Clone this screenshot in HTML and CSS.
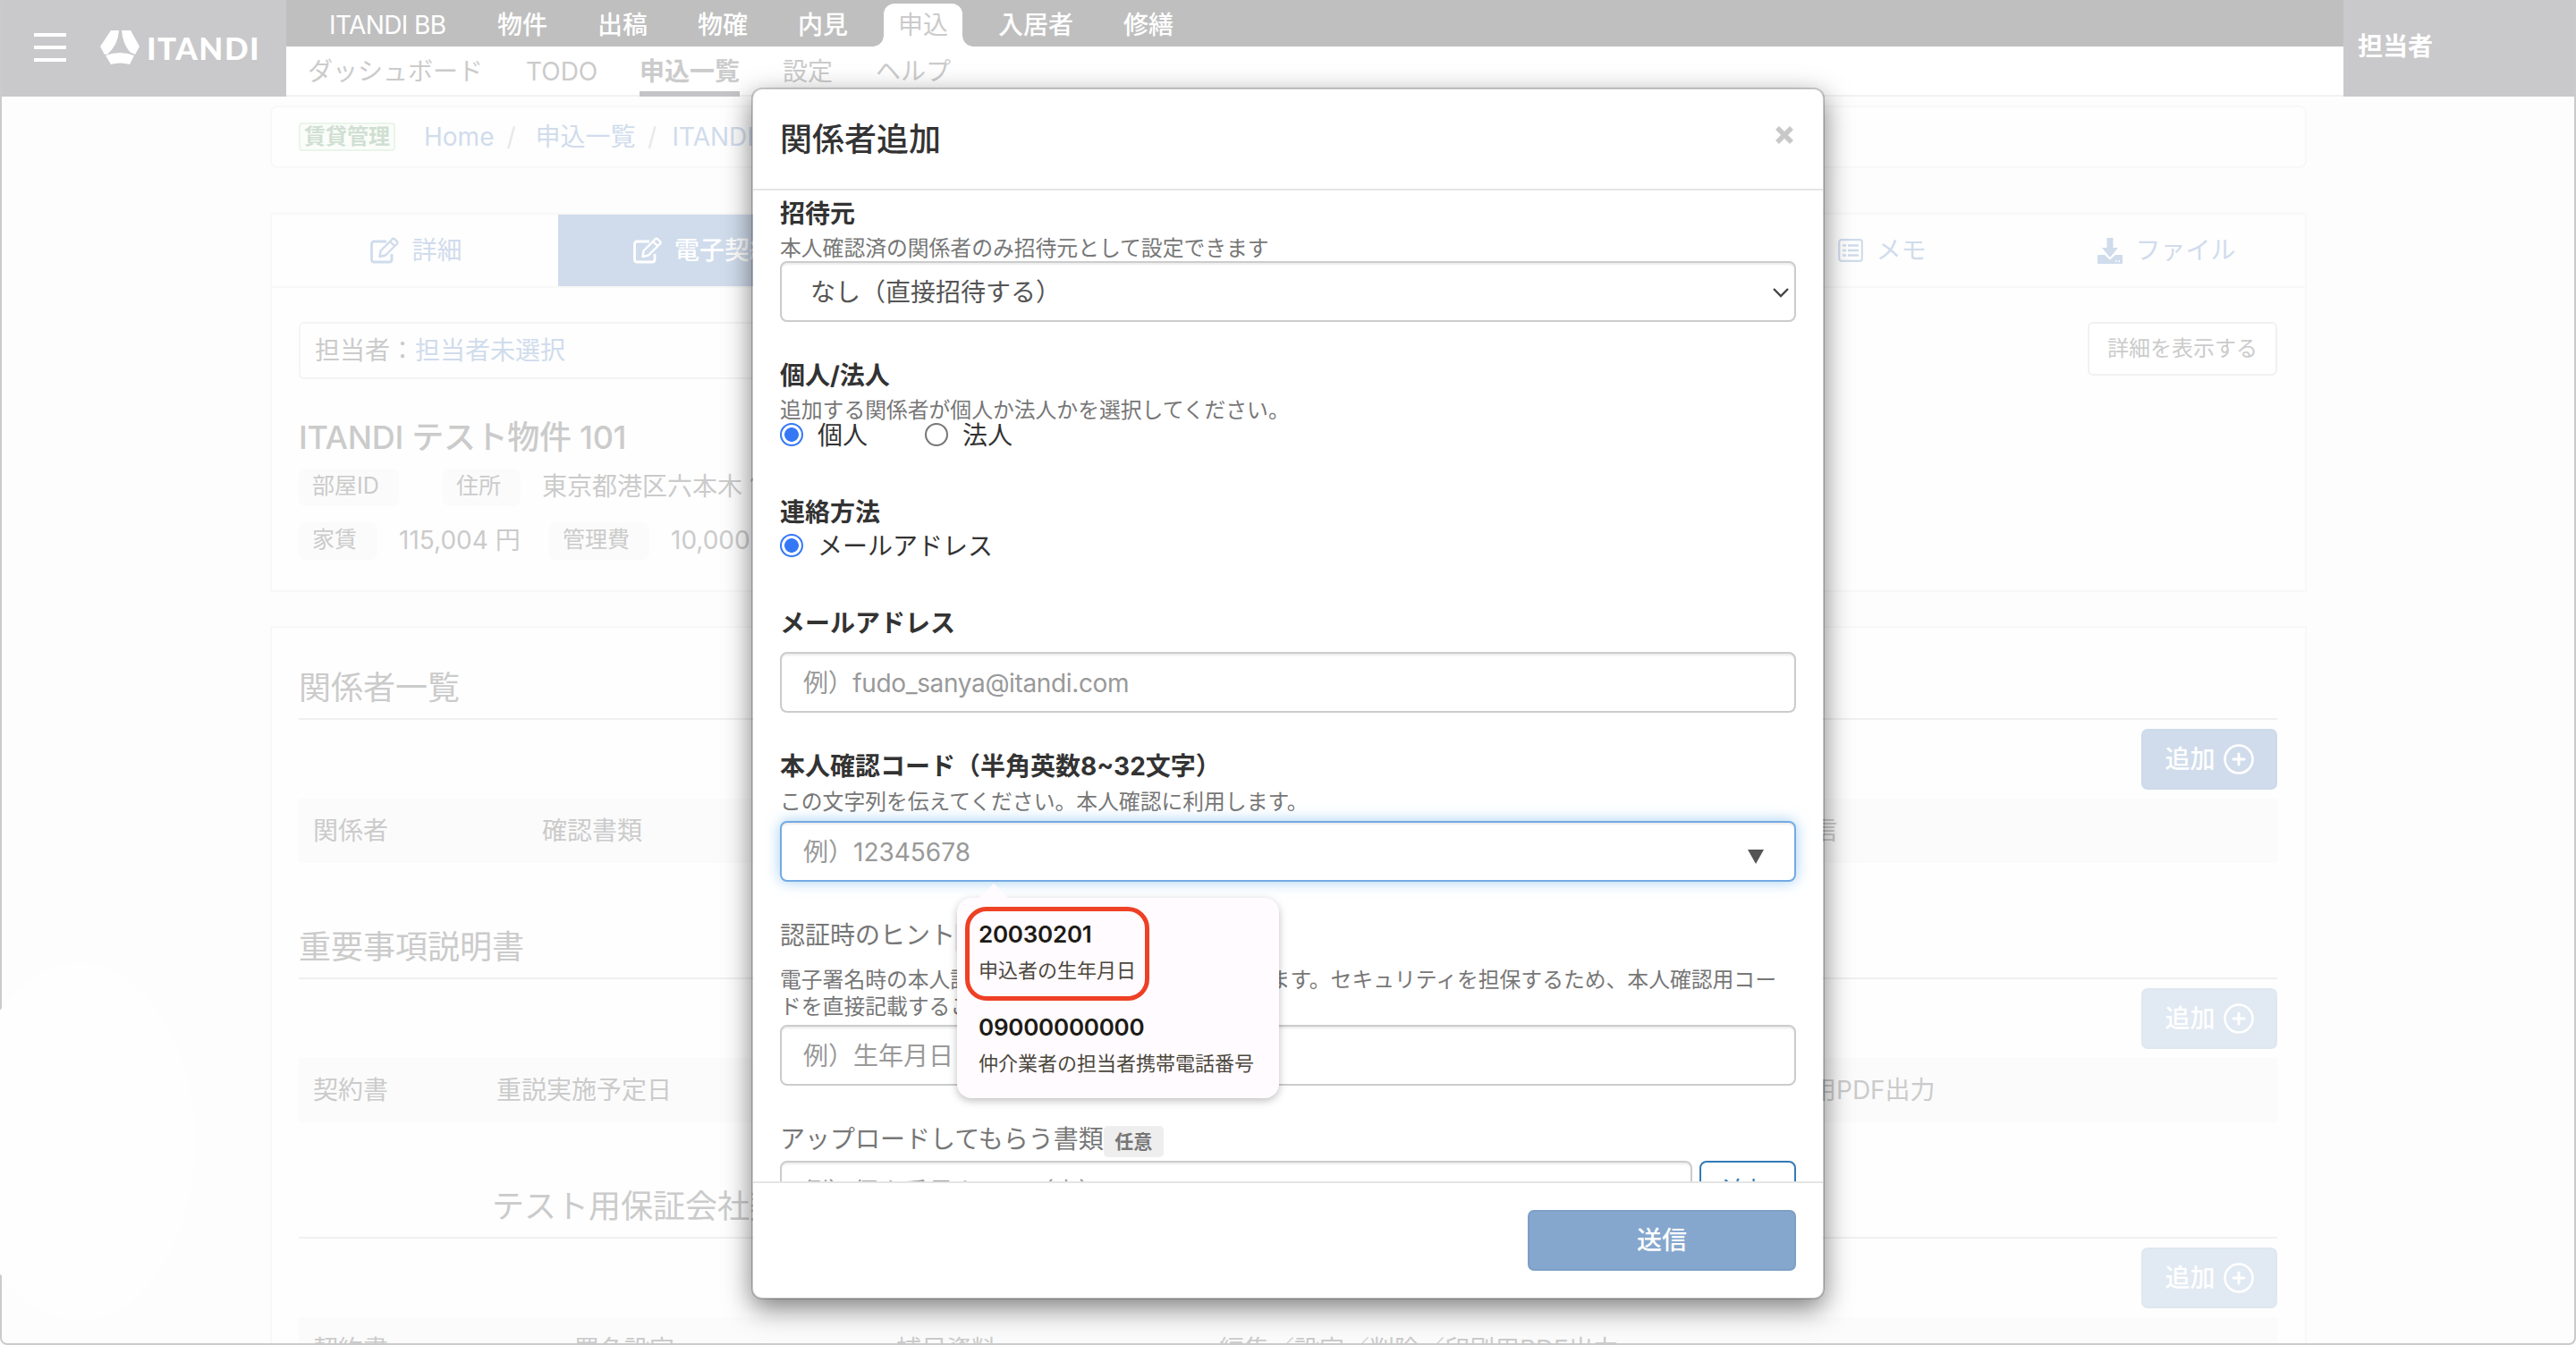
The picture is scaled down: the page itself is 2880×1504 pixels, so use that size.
FILE: index.html
```html
<!DOCTYPE html>
<html lang="ja">
<head>
<meta charset="utf-8">
<title>申込一覧 - ITANDI</title>
<link rel="stylesheet" href="styles.css">
</head>
<body>
<svg class="sprite" width="0" height="0">
  <symbol id="i-edit" viewBox="0 0 32 30">
    <path d="M18 5H4.500Q1.500 5 1.500 8V25.500Q1.500 28 4.500 28H21Q24 28 24 25.500V19" fill="none" stroke="currentColor" stroke-width="2.800"/>
    <path d="M10.500 22L11.500 15.500L24.500 2.500Q26 1.200 27.500 2.500L30 5Q31 6.300 30 7.500L17 20.500Z M22.500 5.500L27 10" fill="none" stroke="currentColor" stroke-width="2.400" stroke-linejoin="round"/>
  </symbol>
  <symbol id="i-list" viewBox="0 0 28 26">
    <rect x="1.200" y="1.200" width="25.600" height="23.600" rx="2.500" fill="none" stroke="currentColor" stroke-width="2.200"/>
    <path d="M5 7.500h4M5 13h4M5 18.500h4M11 7.500h12M11 13h12M11 18.500h12" stroke="currentColor" stroke-width="2.400"/>
  </symbol>
  <symbol id="i-save" viewBox="0 0 28 30">
    <path d="M10.500 1h7v11h5.500l-9 11l-9-11h5.500z" fill="currentColor"/>
    <path d="M1 20h7l6 5.500l6-5.500h7q1 0 1 1v8q0 1-1 1H1q-1 0-1-1v-8q0-1 1-1z" fill="currentColor"/>
    <path d="M20 26h1.500v2h-1.500zM23.500 26h1.500v2h-1.500z" fill="#fff"/>
  </symbol>
  <symbol id="i-plus" viewBox="0 0 34 34">
    <circle cx="17" cy="17" r="15.500" fill="none" stroke="currentColor" stroke-width="2.600"/>
    <path d="M17 11v12M11 17h12" stroke="currentColor" stroke-width="3" stroke-linecap="round"/>
  </symbol>
</svg>

<div class="window">
  <header class="header">
    <div class="brand">
      <div class="burger"><i></i><i></i><i></i></div>
      <svg class="mark" width="44" height="38" viewBox="0 0 44 38">
        <path d="M12 0H21Q20 16 8 27Q6 26 5 27L0 18Z" fill="#fff"/>
        <path d="M24 0H34L44 18L39 27Q36 25 34 25Q25 15 24 0Z" fill="#fff"/>
        <path d="M6 28Q22 22 38 28L33 38Q22 35 12 38Z" fill="#fff"/>
      </svg>
      <span class="wordmark">ITANDI</span>
    </div>
    <div class="menus">
      <nav class="nav">
        <a class="nav-bb">ITANDI BB</a><a>物件</a><a>出稿</a><a>物確</a><a>内見</a><a class="on">申込</a><a>入居者</a><a>修繕</a>
      </nav>
      <nav class="subnav">
        <a>ダッシュボード</a><a class="todo">TODO</a><a class="on">申込一覧</a><a>設定</a><a>ヘルプ</a>
      </nav>
    </div>
    <div class="user">担当者</div>
  </header>

  <main class="main">
    <div class="crumbs">
      <span class="tag">賃貸管理</span>
      <a>Home</a><i>/</i><a>申込一覧</a><i class="last">/</i><a>ITANDI</a>
    </div>

    <section class="card summary">
      <div class="tabs">
        <a class="tab tab-detail"><svg width="32" height="30"><use href="#i-edit"/></svg>詳細</a>
        <a class="tab tab-sign on"><svg width="32" height="30"><use href="#i-edit"/></svg>電子契約</a>
        <a class="tab tab-memo"><svg width="28" height="26"><use href="#i-list"/></svg>メモ</a>
        <a class="tab tab-file"><svg width="28" height="30"><use href="#i-save"/></svg>ファイル</a>
      </div>
      <div class="inner">
        <div class="owner-row">
          <div class="owner">担当者：<a>担当者未選択</a></div>
          <button class="show">詳細を表示する</button>
        </div>
        <h1 class="room">ITANDI テスト物件 101</h1>
        <div class="facts">
          <b class="w-id">部屋ID</b><b class="w-addr">住所</b><span>東京都港区六本木 1</span>
        </div>
        <div class="facts second">
          <b class="w-rent">家賃</b><span class="rent">115,004 円</span><b class="w-fee">管理費</b><span>10,000 円</span>
        </div>
      </div>
    </section>

    <section class="card lists">
      <div class="block">
        <h2>関係者一覧</h2>
        <div class="tools"><button class="add">追加<svg width="34" height="34"><use href="#i-plus"/></svg></button></div>
        <div class="thead g1"><span>関係者</span><span>確認書類</span><span>送信</span></div>
      </div>
      <div class="block">
        <h2>重要事項説明書</h2>
        <div class="tools"><button class="add dim">追加<svg width="34" height="34"><use href="#i-plus"/></svg></button></div>
        <div class="thead g2"><span>契約書</span><span>重説実施予定日</span><span>印刷用PDF出力</span></div>
      </div>
      <div class="block">
        <h2 class="indent">テスト用保証会社契約書</h2>
        <div class="tools"><button class="add dim">追加<svg width="34" height="34"><use href="#i-plus"/></svg></button></div>
        <div class="thead g3"><span>契約書</span><span>署名設定</span><span>補足資料</span><span>編集／設定／削除／印刷用PDF出力</span></div>
      </div>
    </section>
  </main>
  <div class="frame"></div>
  <div class="glow"></div>

  <div class="modal">
    <div class="modal-head">
      <h3>関係者追加</h3>
      <svg class="close" width="22" height="22" viewBox="0 0 22 22"><path d="M3 3L19 19M19 3L3 19" stroke="#c8c8c8" stroke-width="5.500"/></svg>
    </div>
    <div class="modal-body">
      <div class="field inviter">
        <label>招待元</label>
        <p class="help">本人確認済の関係者のみ招待元として設定できます</p>
        <div class="control select">なし（直接招待する）
          <svg width="20" height="12" viewBox="0 0 20 12"><path d="M2 2L10 10L18 2" fill="none" stroke="#444" stroke-width="2.400"/></svg>
        </div>
      </div>
      <div class="field kind">
        <label>個人/法人</label>
        <p class="help">追加する関係者が個人か法人かを選択してください。</p>
        <div class="radios"><span class="radio on"></span><span class="opt first">個人</span><span class="radio"></span><span class="opt">法人</span></div>
      </div>
      <div class="field contact">
        <label>連絡方法</label>
        <div class="radios"><span class="radio on"></span><span class="opt">メールアドレス</span></div>
      </div>
      <div class="field mail">
        <label>メールアドレス</label>
        <input class="control" placeholder="例）fudo_sanya@itandi.com">
      </div>
      <div class="field code">
        <label>本人確認コード（半角英数8~32文字）</label>
        <p class="help">この文字列を伝えてください。本人確認に利用します。</p>
        <div class="combo">
          <input class="control focus" placeholder="例）12345678">
          <span class="caret"></span>
          <div class="suggest">
            <span class="tip"></span>
            <div class="item picked"><strong>20030201</strong><small>申込者の生年月日</small></div>
            <div class="item"><strong>09000000000</strong><small>仲介業者の担当者携帯電話番号</small></div>
          </div>
        </div>
      </div>
      <div class="field hint">
        <div class="soft">認証時のヒント<em>任意</em></div>
        <p class="help">電子署名時の本人認証画面でヒントとして表示されます。セキュリティを担保するため、本人確認用コー<br>ドを直接記載することはお控えください。</p>
        <input class="control" placeholder="例）生年月日">
      </div>
      <div class="field upload">
        <div class="soft">アップロードしてもらう書類<em>任意</em></div>
        <div class="pair"><input class="control" placeholder="例）個人番号カード（表）"><button class="outline">追加</button></div>
      </div>
    </div>
    <div class="modal-foot"><button class="submit">送信</button></div>
  </div>
</div>
</body>
</html>
```
FILE: styles.css
```css
* { box-sizing: border-box; }
html, body { margin: 0; }
body, button, input {
  font-family: Inter, "Noto Sans CJK JP", sans-serif;
  font-size: 28px;
  line-height: 40px;
}
button, input { margin: 0; border: 0; padding: 0; }
h1, h2, h3, p { margin: 0; font-weight: 400; }
.sprite { position: absolute; }

.window {
  position: relative;
  width: 2880px;
  height: 1504px;
  overflow: hidden;
  background: #fdfdfd;
  color: #cbcbcb;
}
/* thin outline of the browser window */
.frame {
  position: absolute;
  inset: 0;
  border: 2px solid #cbcbcb;
  border-top: 0;
  border-radius: 8px;
}
.glow {
  position: absolute;
  left: -42px;
  top: 1077px;
  width: 260px;
  height: 400px;
  border-radius: 50%;
  background: #fefefe;
}

/* header */
.header { display: flex; height: 108px; }
.brand {
  width: 320px;
  background: #c9c9cb;
  display: flex;
  align-items: center;
  padding-left: 38px;
  padding-bottom: 3px;
}
.burger { display: flex; flex-direction: column; gap: 10px; margin-right: 38px; }
.burger i { width: 36px; height: 4px; background: #fff; }
.mark { margin-right: 8px; }
.wordmark { color: #fff; font: 900 35px/40px Lato, sans-serif; letter-spacing: 1.500px; }
.menus { flex: 1; background: #fff; }
.nav {
  height: 52px;
  display: flex;
  align-items: flex-end;
  background: #bfbfbf;
  color: #fff;
  padding-left: 36px;
}
.nav a { height: 48px; padding: 0 16px; margin-right: 24px; position: relative; font-weight: 500; line-height: 48px; }
.nav a:nth-child(n + 2) { left: 1px; }
.nav-bb { width: 164px; margin-left: -4px; white-space: nowrap; letter-spacing: -0.600px; }
.nav .nav-bb { font-weight: 400; margin-right: 23px; }
.nav .on { background: #fff; color: #cbcbcb; border-radius: 12px 12px 0 0; font-weight: 400; }
.nav .on::before, .nav .on::after {
  content: "";
  position: absolute;
  bottom: 0;
  width: 12px;
  height: 12px;
}
.nav .on::before { left: -12px; background: radial-gradient(circle at 0 0, #bfbfbf 11.500px, #fff 12px); }
.nav .on::after { right: -12px; background: radial-gradient(circle at 100% 0, #bfbfbf 11.500px, #fff 12px); }
.subnav {
  height: 56px;
  display: flex;
  gap: 48px;
  padding-left: 24px;
  line-height: 56px;
  border-bottom: 2px solid #f2f2f2;
}
.subnav a { height: 56px; }
.todo { width: 79px; }
.subnav .on { font-weight: 700; border-bottom: 6px solid #c4c4c6; }
.user {
  width: 260px;
  background: #c9c9cb;
  color: #fff;
  font-weight: 700;
  padding-left: 16px;
  line-height: 105px;
}

/* page cards */
.main { width: 2277px; margin-left: 302px; padding-top: 10px; }
.main a { color: #d0dcec; }
.crumbs {
  height: 70px;
  display: flex;
  align-items: center;
  border: 2px solid #f8f8f8;
  border-radius: 8px;
  background: #fefefe;
  padding-left: 30px;
}
.tag {
  width: 108px;
  height: 32px;
  border: 2px solid #eaf5ea;
  border-radius: 4px;
  background: #fafdfa;
  color: #d0dfd2;
  font-size: 24px;
  font-weight: 700;
  line-height: 28px;
  text-align: center;
  margin-right: 32px;
}
.crumbs i { width: 46px; text-align: center; color: #e8e8e8; font-style: normal; padding-right: 8px; }
.crumbs .last { width: 41px; padding-right: 4px; }
.card { border: 2px solid #f8f8f8; background: #fefefe; }
.summary { margin-top: 50px; height: 424px; }
.tabs { display: flex; height: 82px; border-bottom: 2px solid #f8f8f8; }
.tab { display: flex; align-items: center; justify-content: center; gap: 14px; padding-left: 3px; padding-bottom: 1px; }
.tab-detail { width: 320px; }
.tab-sign { width: 326px; padding-left: 0; }
.main .tab-sign { background: #d0dcec; color: #fff; font-weight: 500; }
.tab-memo { width: 324px; margin-left: auto; }
.tab-file { width: 312px; }
.inner { padding: 38px 31px 0 30px; }
.owner-row { display: flex; justify-content: space-between; }
.owner {
  width: 1400px;
  height: 64px;
  border: 2px solid #f4f4f4;
  border-radius: 6px;
  padding-left: 16px;
  line-height: 60px;
}
.show {
  width: 212px;
  height: 60px;
  border: 2px solid #f1f1f1;
  border-radius: 6px;
  background: #fff;
  color: #cbcbcb;
  font-size: 24px;
}
.room { font-size: 36px; font-weight: 500; line-height: 50px; margin-top: 40px; letter-spacing: -0.300px; }
.facts { display: flex; align-items: center; height: 42px; margin-top: 10px; white-space: nowrap; }
.facts.second { margin-top: 18px; }
.facts b {
  height: 42px;
  border-radius: 8px;
  background: #fbfbfb;
  font-weight: 400;
  font-size: 25px;
  line-height: 38px;
  padding-left: 15px;
}
.facts span { line-height: 38px; padding-bottom: 3px; }
.w-id { width: 112px; margin-right: 49px; }
.w-addr { width: 87px; margin-right: 24px; }
.w-rent { width: 88px; margin-right: 24px; }
.rent { width: 168px; }
.w-fee { width: 112px; margin-right: 24px; }

.lists { margin-top: 38px; height: 860px; padding: 31px 31px 0 30px; overflow: hidden; }
.block { height: 290px; }
.block h2 { font-size: 36px; height: 72px; line-height: 72px; border-bottom: 2px solid #f0f0f0; }
.block .indent { padding-left: 216px; }
.tools { display: flex; justify-content: flex-end; padding-top: 10px; height: 88px; }
.add {
  width: 152px;
  height: 68px;
  border-radius: 7px;
  border: 2px solid #cddae9;
  background: #d0dceb;
  color: #fff;
  font-weight: 500;
  display: flex;
  align-items: center;
  justify-content: center;
  gap: 9px;
}
.add.dim { background: #e1e9f2; border-color: #dfe7f0; }
.thead { display: grid; height: 72px; line-height: 72px; background: #fbfbfb; padding-left: 16px; white-space: nowrap; }
.g1 { grid-template-columns: 256px 1392px 1fr; }
.g2 { grid-template-columns: 205px 1414px 1fr; }
.g3 { grid-template-columns: 292px 360px 361px 1fr; }

/* dialog */
.modal {
  position: absolute;
  left: 840px;
  top: 98px;
  width: 1200px;
  height: 1355px;
  border: 2px solid rgba(0, 0, 0, 0.2);
  border-radius: 12px;
  background: #fff;
  background-clip: padding-box;
  box-shadow: 0 10px 30px rgba(0, 0, 0, 0.5);
  color: #333;
}
.modal-head {
  height: 113px;
  display: flex;
  justify-content: space-between;
  padding: 0 32px 0 30px;
  border-bottom: 2px solid #e5e5e5;
}
.modal-head h3 { font-size: 36px; font-weight: 500; line-height: 112px; }
.close { margin-top: 40px; }
.modal-body { height: 1108px; overflow: hidden; padding: 5px 30px 0; }
.field label { display: block; height: 40px; line-height: 42px; font-weight: 700; color: #333; }
.help { font-size: 23.800px; line-height: 28px; margin-top: 6px; color: #777; white-space: nowrap; }
.control {
  display: block;
  width: 100%;
  height: 68px;
  border: 2px solid #ccc;
  border-radius: 8px;
  background: #fff;
  box-shadow: inset 0 2px 2px rgba(0, 0, 0, 0.075);
  padding: 2px 24px 0;
  color: #555;
}
.control::placeholder { color: #999; opacity: 1; }
.mail .control { letter-spacing: -0.350px; }
.select {
  display: flex;
  align-items: center;
  justify-content: space-between;
  padding: 2px 5px 0 32px;
}
.kind { margin-top: 39px; }
.radios { display: flex; align-items: center; height: 28px; line-height: 28px; }
.radio { width: 26px; height: 26px; border: 2px solid #767676; border-radius: 50%; background: #fff; position: relative; top: -1px; }
.radio.on { border-color: #3478f6; background: radial-gradient(circle, #3478f6 7.500px, #fff 8.300px); }
.opt { margin-left: 16px; }
.opt.first { margin-right: 64px; }
.contact { margin-top: 51px; }
.contact .radios { margin-top: 5px; margin-bottom: -1px; }
.mail { margin-top: 53px; }
.mail label { line-height: 40px; }
.mail .control { margin-top: 12px; }
.code { margin-top: 40px; }
.code label { line-height: 40px; }
.code .help { margin-top: 6px; }
.combo { position: relative; margin-top: 7px; }
.focus { border-color: #74aae2; box-shadow: inset 0 2px 2px rgba(0, 0, 0, 0.075), 0 0 16px rgba(102, 175, 233, 0.6); }
.caret {
  position: absolute;
  right: 36px;
  top: 32px;
  border: 9px solid transparent;
  border-top: 16px solid #555;
  border-bottom: 0;
}
.suggest {
  position: absolute;
  left: 198px;
  top: 86px;
  width: 360px;
  height: 224px;
  border-radius: 16px;
  background: #fffbff;
  box-shadow: 0 3px 10px rgba(0, 0, 0, 0.25);
  padding: 10px 9px;
  z-index: 2;
}
.tip {
  position: absolute;
  left: 24px;
  top: -16px;
  border: 17px solid transparent;
  border-bottom: 17px solid #fffbff;
  border-top: 0;
}
.item { padding: 10px 15px 0; height: 105px; white-space: nowrap; }
.item strong, .item small { display: block; }
.item strong { color: #1d1b16; font-weight: 600; font-size: 26px; line-height: 40px; letter-spacing: -0.250px; }
.item small { color: #4b473c; font-size: 22px; line-height: 40px; }
.picked {
  width: 206px;
  border: 5px solid #ee4025;
  border-radius: 24px;
  padding: 6px 10px 0;
}
.hint { margin-top: 40px; }
.soft { height: 40px; color: #777; display: flex; align-items: center; }
.soft em {
  width: 67px;
  height: 35px;
  margin-top: 5px;
  border-radius: 5px;
  background: #eee;
  font: 700 21px/35px Inter, "Noto Sans CJK JP", sans-serif;
  text-align: center;
}
.hint .help { line-height: 30px; margin-top: 15px; }
.hint .control { margin-top: 5px; }
.upload { margin-top: 40px; }
.pair { display: flex; gap: 8px; margin-top: 4px; }
.outline {
  width: 108px;
  height: 68px;
  flex: none;
  border: 2px solid #337ab7;
  border-radius: 8px;
  background: #fff;
  color: #337ab7;
}
.modal-foot {
  border-top: 2px solid #e5e5e5;
  padding: 30px 30px 0;
  display: flex;
  justify-content: flex-end;
}
.submit {
  width: 300px;
  height: 68px;
  border: 2px solid #7c9fc6;
  border-radius: 7px;
  background: #86a7cd;
  color: #fff;
  font-weight: 500;
}
```
